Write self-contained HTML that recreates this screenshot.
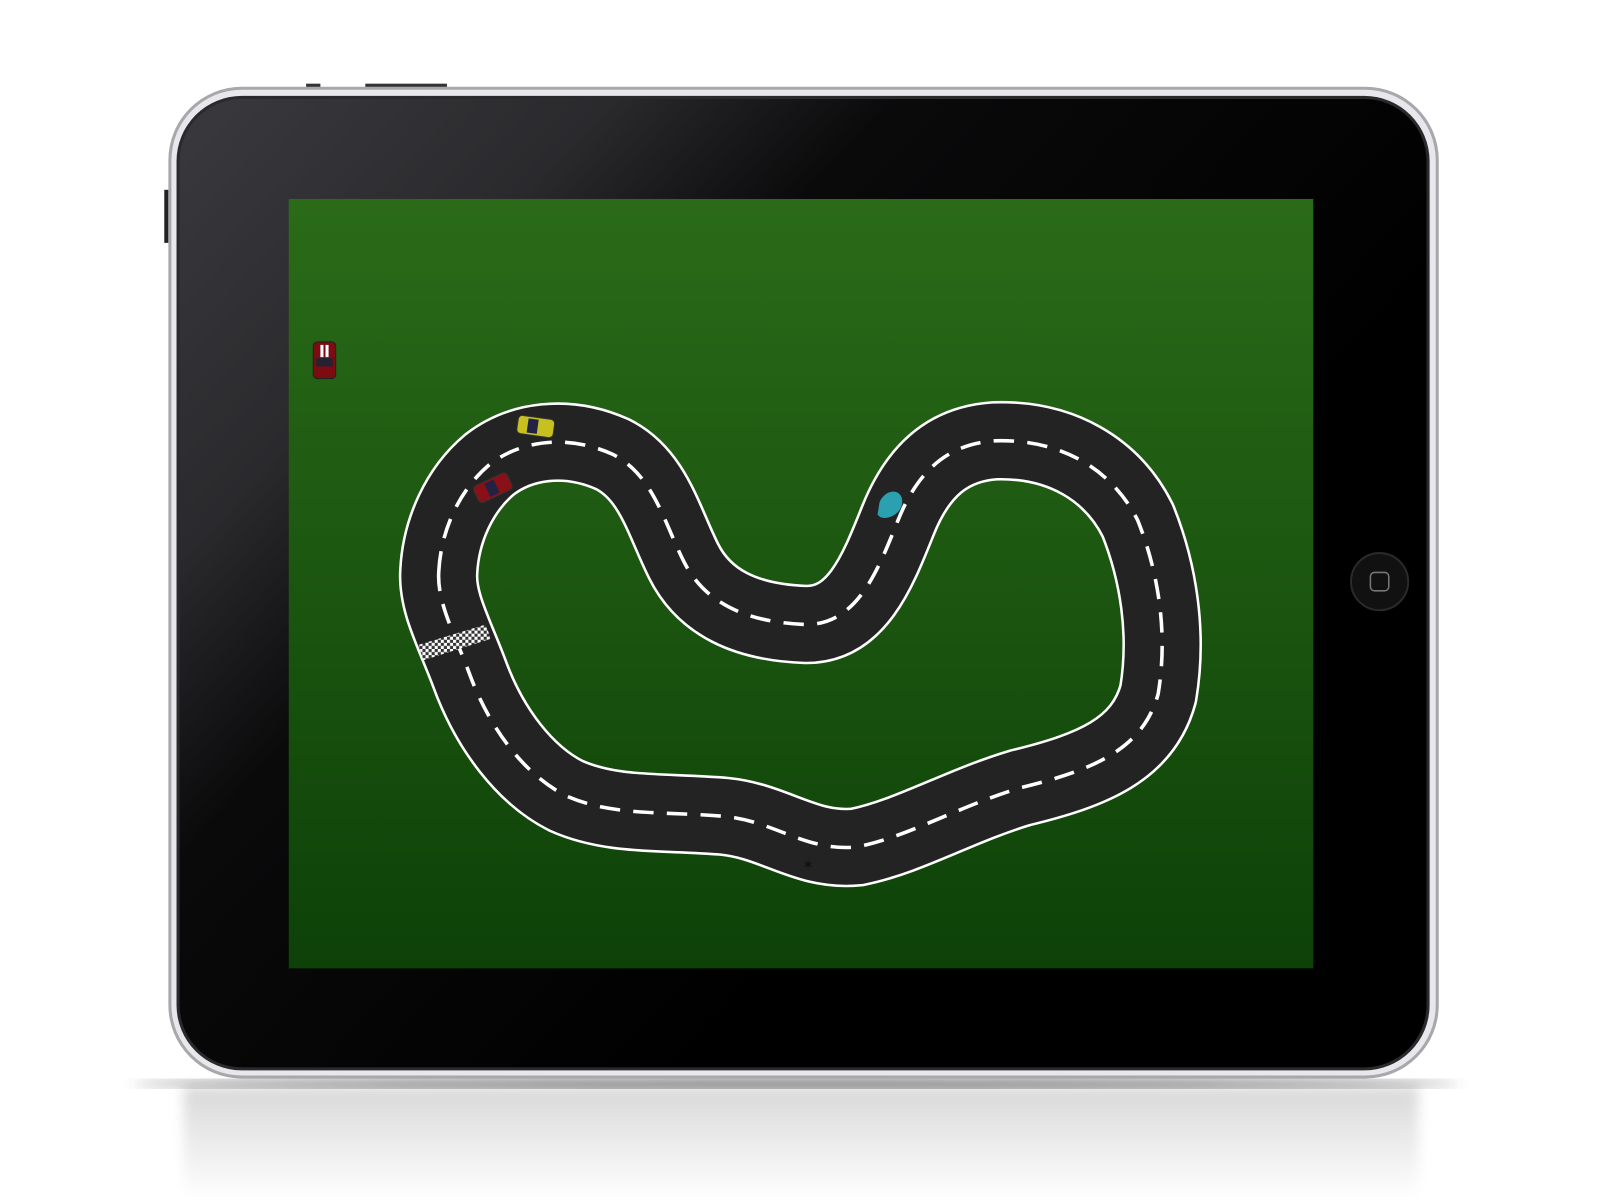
<!DOCTYPE html>
<html><head><style>html,body{margin:0;padding:0;background:#fff;overflow:hidden}</style></head>
<body>
<svg width="1600" height="1200" viewBox="0 0 1568 1176" xmlns="http://www.w3.org/2000/svg" style="display:block">
<defs>
<linearGradient id="g" x1="0" y1="0" x2="0" y2="1"><stop offset="0" stop-color="#2a6b18"/><stop offset="1" stop-color="#0d4108"/></linearGradient>
<linearGradient id="refl" x1="0" y1="0" x2="0" y2="1"><stop offset="0" stop-color="#d8d8d8"/><stop offset="1" stop-color="#fff"/></linearGradient>
<linearGradient id="bez" x1="0" y1="0" x2="0.75" y2="0.55"><stop offset="0" stop-color="#3a3a3e"/><stop offset="0.3" stop-color="#2a2a2d"/><stop offset="0.5" stop-color="#0a0a0b"/><stop offset="1" stop-color="#000"/></linearGradient>
<filter id="bl"><feGaussianBlur stdDeviation="6"/></filter>
<pattern id="chk" width="6" height="6" patternUnits="userSpaceOnUse"><rect width="6" height="6" fill="#fff"/><rect width="3" height="3" fill="#333"/><rect x="3" y="3" width="3" height="3" fill="#333"/></pattern>
<path id="t" d="M430,560 C432,520 450,480 480,455 C510,432 555,425 600,445 C640,465 650,510 670,550 C690,590 730,610 790,612 C840,612 860,560 880,510 C900,460 930,435 975,432 C1040,430 1090,460 1115,510 C1135,560 1145,620 1135,680 C1120,735 1070,755 1000,772 C940,790 890,820 840,830 C790,835 760,805 710,800 C650,795 600,800 555,780 C515,760 480,715 460,660 C445,620 428,590 430,560 Z"/>
</defs>
<rect x="180" y="1065" width="1210" height="111" fill="url(#refl)" filter="url(#bl)"/>
<ellipse cx="780" cy="1062" rx="650" ry="4" fill="#555" filter="url(#bl)"/>
<rect x="300" y="82" width="14" height="4" fill="#333"/>
<rect x="358" y="82" width="80" height="4" fill="#333"/>
<rect x="161" y="186" width="4" height="52" fill="#222"/>
<rect x="165" y="85" width="1245" height="972" rx="72" fill="#a8a8ac"/>
<rect x="168" y="88" width="1239" height="966" rx="69" fill="#e8e8ec"/>
<rect x="173" y="94" width="1228" height="955" rx="64" fill="#2a2a2c"/>
<rect x="176" y="97" width="1222" height="949" rx="61" fill="url(#bez)"/>
<rect x="283" y="195" width="1004" height="754" fill="url(#g)"/>
<circle cx="1352" cy="570" r="28" fill="#111" stroke="#2a2a2a" stroke-width="2"/>
<rect x="1343" y="561" width="18" height="18" rx="4" fill="none" stroke="#777" stroke-width="1.5"/>
<g fill="none" stroke-linejoin="round" stroke-linecap="round">
<use href="#t" stroke="#fff" stroke-width="78"/>
<use href="#t" stroke="#232323" stroke-width="73"/>
<use href="#t" stroke="#fff" stroke-width="3.5" stroke-dasharray="20 13" stroke-linecap="butt"/>
</g>
<polygon points="410,632 476,612 481,626 415,647" fill="url(#chk)"/>
<g transform="translate(318,353)"><rect x="-11" y="-18" width="22" height="36" rx="4" fill="#7a0c12" stroke="#222"/><rect x="-4" y="-15" width="3" height="12" fill="#fff"/><rect x="1" y="-15" width="3" height="12" fill="#fff"/><rect x="-8" y="-2" width="16" height="8" fill="#223"/></g>
<g transform="translate(525,418) rotate(8)"><rect x="-18" y="-9" width="36" height="18" rx="4" fill="#c8c020" stroke="#333"/><rect x="-8" y="-7" width="10" height="14" fill="#224"/></g>
<g transform="translate(483,478) rotate(-25)"><rect x="-18" y="-9" width="36" height="18" rx="4" fill="#8a1018" stroke="#333"/><rect x="-6" y="-7" width="10" height="14" fill="#224"/></g>
<path d="M862,492 C868,478 886,478 884,494 C882,506 864,512 860,504 Z" fill="#2aa0b0"/>
<text x="786" y="852" font-family="Liberation Sans, sans-serif" font-size="14" fill="#111">✶</text>
</svg>
</body></html>
